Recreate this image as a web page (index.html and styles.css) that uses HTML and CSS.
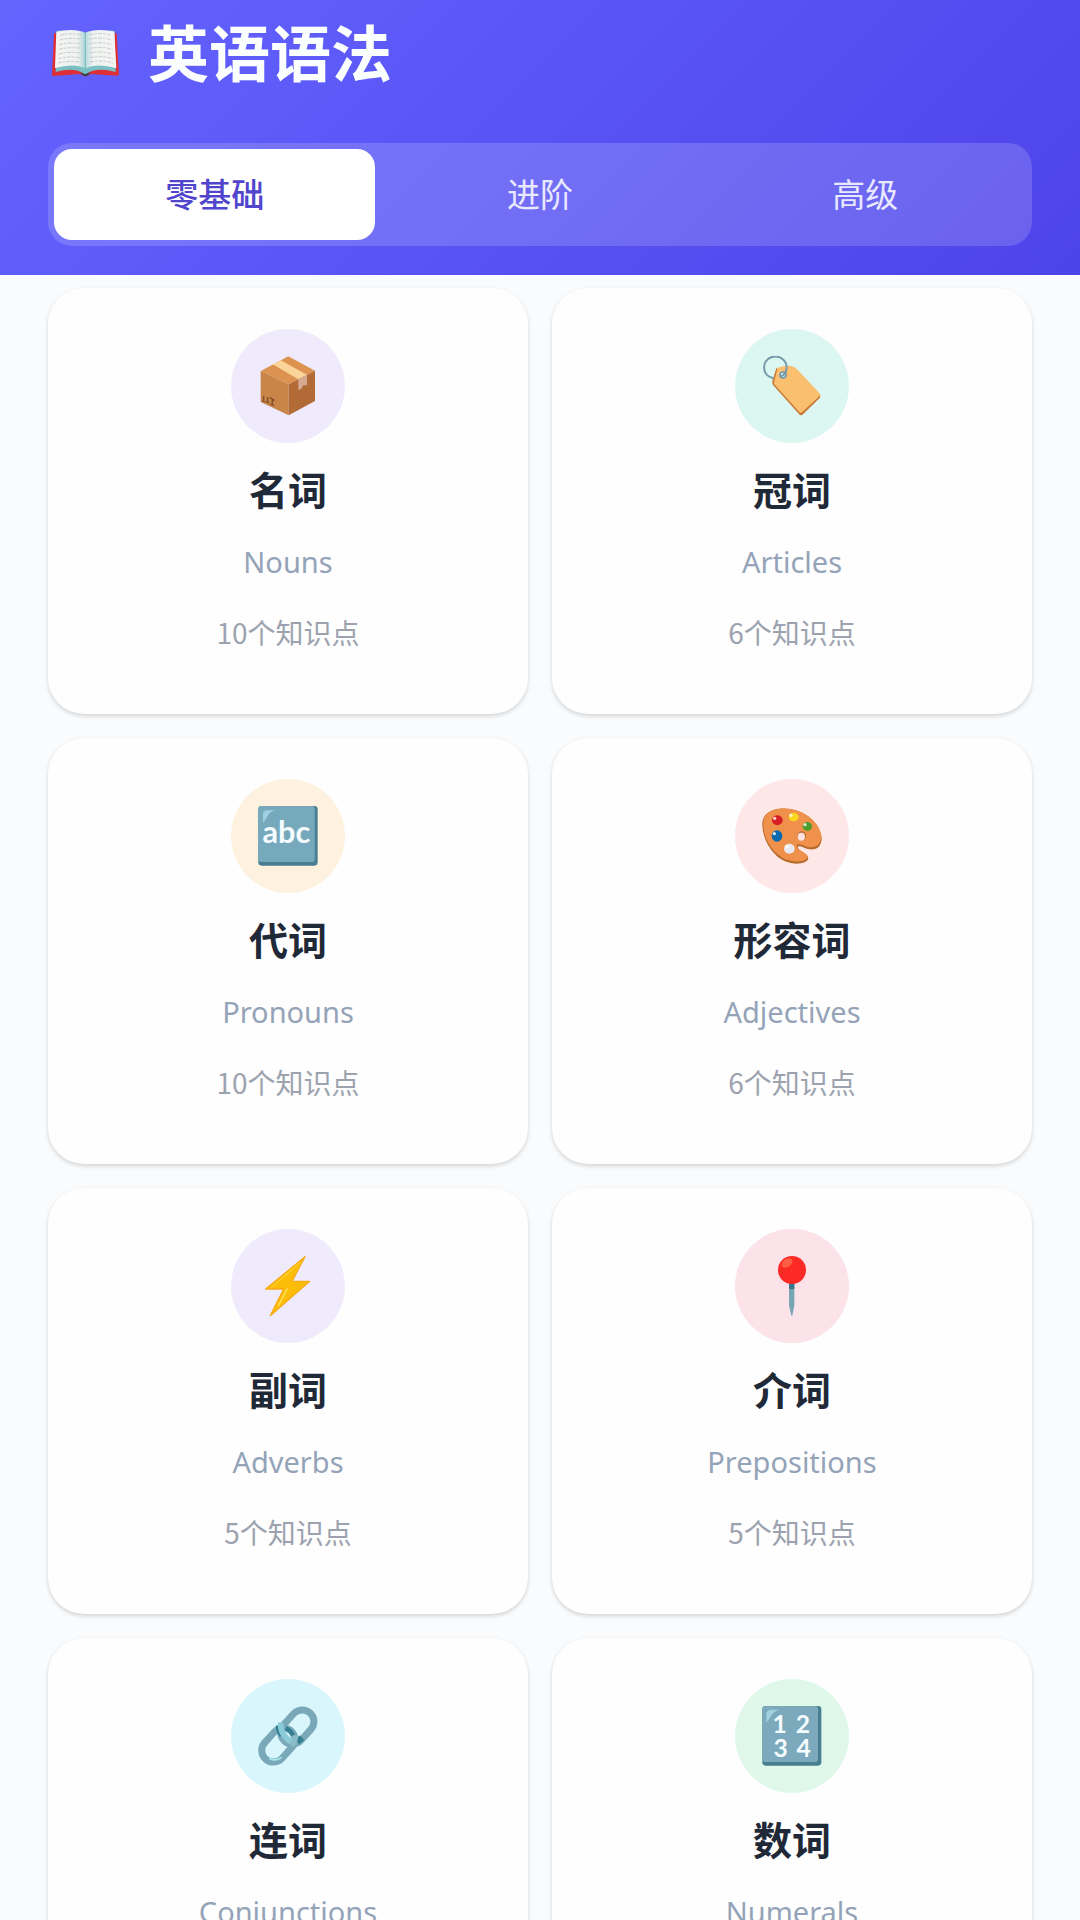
FILE: index.html
```html
<!DOCTYPE html>
<html lang="zh-CN">
<head>
<meta charset="utf-8">
<meta name="viewport" content="width=device-width, initial-scale=1">
<title>英语语法</title>
<link rel="stylesheet" href="styles.css">
</head>
<body>
<header class="header">
  <div class="brand">
    <svg class="brand-icon" viewBox="144 72 216 168" aria-hidden="true">
      <defs>
        <linearGradient id="page" x1="0" x2="1"><stop offset="0" stop-color="#f4f5f2"/><stop offset=".75" stop-color="#eef2ef"/><stop offset="1" stop-color="#a9d3d6"/></linearGradient>
        <linearGradient id="page2" x1="1" x2="0"><stop offset="0" stop-color="#f4f5f2"/><stop offset=".75" stop-color="#f1f3f1"/><stop offset="1" stop-color="#b5dadb"/></linearGradient>
      </defs>
      <path d="M162 100L350 100L357 222Q357 228 350 227L272 222Q256 236 240 222L162 228Q155 228 156 221Z" fill="#dd2f36"/>
      <path d="M240 218H272L264 226Q256 232 248 226Z" fill="#37474f"/>
      <path d="M170 92L167 216Q222 200 254 222L257 222Q290 200 347 216L343 92Q290 88 256 108Q222 88 170 92Z" fill="#79bfc3"/>
      <path d="M169 95Q222 83 256 98V205Q222 188 165 204Z" fill="url(#page)"/>
      <path d="M343 95Q290 83 256 98V205Q290 188 349 204Z" fill="url(#page2)"/>
      <path d="M180 106q28-8 65-2M179 120q30-8 66-3M178 134q30-8 66-3M177 148q30-8 67-3M176 162q30-8 67-3M175 176q30-8 67-3M174 189q30-8 67-3M268 104q35-8 66 2M268 117q35-7 67 3M268 131q36-7 68 3M269 145q36-7 68 3M269 159q36-7 69 3M270 173q36-7 69 3M270 186q36-7 70 3" fill="none" stroke="#b4b7b9" stroke-width="2" stroke-dasharray="12 3 7 4"/>
      <path d="M256 98V222" stroke="#78babd" stroke-width="3"/>
    </svg>
    <h1 class="title">英语语法</h1>
  </div>
  <nav class="tabs" aria-label="难度">
    <button class="tab tab-active" type="button" aria-pressed="true">零基础</button>
    <button class="tab" type="button" aria-pressed="false">进阶</button>
    <button class="tab" type="button" aria-pressed="false">高级</button>
  </nav>
</header>
<main class="content">
  <div class="grid">
    <a class="card" href="#nouns">
      <span class="badge violet">
        <svg class="icon" viewBox="145 140 180 180" aria-hidden="true">
          <path d="M236 141L316 184L237 225L153 185Z" fill="#dc9350"/>
          <path d="M153 185L237 225V318L153 278Z" fill="#c98447"/>
          <path d="M316 184V275L237 318V225Z" fill="#b26a36"/>
          <path d="M189 165L213 153L292 196L266 210Z" fill="#fbd49a"/>
          <path d="M266 210L292 196V228L280 228L275 239L266 242Z" fill="#d5aa91"/>
          <path d="M162 259v14M158 274l9 4M174 263v16M170 277l8 4M188 268v20M182 284l12 5M181 265l14 9" stroke="#7d4f2a" stroke-width="4" fill="none"/>
        </svg>
      </span>
      <span class="name">名词</span><span class="english">Nouns</span><span class="count">10个知识点</span>
    </a>
    <a class="card" href="#articles">
      <span class="badge teal">
        <svg class="icon" viewBox="127 140 180 180" aria-hidden="true">
          <path d="M170 176L158 216Q157 224 162 229L238 314Q244 321 250 315L300 266Q303 262 301 257Z" fill="#c87832"/>
          <path d="M174 175Q192 168 215 170Q224 171 232 180L300 252Q303 257 299 261L247 309Q242 312 238 307L165 226Q161 221 164 214Z" fill="#fbbf70"/>
          <circle cx="190" cy="197" r="9" fill="#dff8f4" stroke="#6e98ab" stroke-width="5"/>
          <path d="M159 206C126 199 124 153 157 143C187 136 205 160 200 182Q198 193 187 200" fill="none" stroke="#7799aa" stroke-width="6" stroke-linecap="round"/>
        </svg>
      </span>
      <span class="name">冠词</span><span class="english">Articles</span><span class="count">6个知识点</span>
    </a>
    <a class="card" href="#pronouns">
      <span class="badge amber">
        <svg class="icon" viewBox="145 140 180 180" aria-hidden="true">
          <rect x="146" y="140" width="178" height="179" rx="10" fill="#477f91"/>
          <rect x="146" y="140" width="169" height="168" rx="9" fill="#76a9bc"/>
          <path d="M160 192V165Q160 153 174 153H197Q177 158 171 176Z" fill="#a0cfe3"/>
          <text class="glyph-text" x="230" y="252" font-size="92" text-anchor="middle">abc</text>
        </svg>
      </span>
      <span class="name">代词</span><span class="english">Pronouns</span><span class="count">10个知识点</span>
    </a>
    <a class="card" href="#adjectives">
      <span class="badge red">
        <svg class="icon" viewBox="127 140 180 180" aria-hidden="true">
          <path d="M128 195C127 160 164 143 202 148C256 151 302 192 306 235C306 265 288 274 264 269C251 265 237 256 234 264C238 277 264 280 266 297C264 313 229 317 205 309C160 296 128 241 128 195Z" fill="#b56a2c"/>
          <path d="M131 190C132 159 164 145 202 148C256 151 302 192 305 230C304 258 286 268 262 262C244 255 230 249 231 263C236 275 261 280 264 292C260 307 229 310 207 303C162 289 129 239 131 190Z" fill="#ef914a"/>
          <ellipse cx="246" cy="230" rx="13" ry="14" fill="#b56a2c"/><ellipse cx="245" cy="232" rx="11" ry="12" fill="#ffe1df"/>
          <ellipse cx="173" cy="183" rx="16" ry="15" fill="#d71f24"/><ellipse cx="222" cy="173" rx="15" ry="13" fill="#f9d71e"/>
          <ellipse cx="263" cy="201" rx="14" ry="13" fill="#4b9e2b"/><ellipse cx="172" cy="230" rx="16" ry="17" fill="#0869ad"/>
          <ellipse cx="209" cy="268" rx="16" ry="15" fill="#e8e8ee"/>
          <g fill="#fff" opacity=".8"><circle cx="165" cy="177" r="5"/><circle cx="214" cy="168" r="5"/><circle cx="256" cy="196" r="5"/><circle cx="164" cy="223" r="5"/><circle cx="202" cy="262" r="6"/></g>
        </svg>
      </span>
      <span class="name">形容词</span><span class="english">Adjectives</span><span class="count">6个知识点</span>
    </a>
    <a class="card" href="#adverbs">
      <span class="badge violet">
        <svg class="icon" viewBox="145 140 180 180" aria-hidden="true">
          <path d="M286 142L168 239H222L182 319L300 216H247Z" fill="#fcbd08" stroke="#f7ab18" stroke-width="4" stroke-linejoin="round"/>
          <path d="M272 159L187 232" stroke="#ffd02b" stroke-width="4" stroke-linecap="round"/>
          <path d="M232 239L207 288" stroke="#ffdc4b" stroke-width="5" stroke-linecap="round"/>
        </svg>
      </span>
      <span class="name">副词</span><span class="english">Adverbs</span><span class="count">5个知识点</span>
    </a>
    <a class="card" href="#prepositions">
      <span class="badge pink">
        <svg class="icon" viewBox="127 140 180 180" aria-hidden="true">
          <path d="M208 218H224V288L218 319H215L208 288Z" fill="#79a6b5"/>
          <path d="M208 220H224V238Q216 241 208 238Z" fill="#35798b"/>
          <circle cx="217" cy="182" r="42" fill="#fc2a24"/>
          <ellipse cx="202" cy="161" rx="18" ry="12" transform="rotate(-35 202 161)" fill="#ff6b4b" opacity=".8"/>
        </svg>
      </span>
      <span class="name">介词</span><span class="english">Prepositions</span><span class="count">5个知识点</span>
    </a>
    <a class="card" href="#conjunctions">
      <span class="badge cyan">
        <svg class="icon" viewBox="145 140 180 180" aria-hidden="true">
          <g fill="none" stroke="#79a9b9" stroke-width="21">
            <rect x="206" y="168" width="114" height="70" rx="35" transform="rotate(-48 263 203)"/>
            <rect x="149" y="222" width="114" height="70" rx="35" transform="rotate(-48 206 257)"/>
            <path d="M208 199Q207 214 218 227" stroke="#347f91" stroke-width="19"/>
            <path d="M214 190Q208 221 245 249" stroke="#8bcad7" stroke-width="17"/>
            <path d="M228 207Q245 214 250 228" stroke="#347f91" stroke-width="13"/>
            <path d="M263 248L277 235" stroke="#347f91" stroke-width="19"/>
            <path d="M255 229Q260 243 245 258" stroke="#8bbdc9" stroke-width="17"/>
          </g>
          <path d="M181 298Q198 307 215 295" fill="none" stroke="#a6e8ee" stroke-width="5" stroke-linecap="round"/>
        </svg>
      </span>
      <span class="name">连词</span><span class="english">Conjunctions</span><span class="count">5个知识点</span>
    </a>
    <a class="card" href="#numerals">
      <span class="badge green">
        <svg class="icon" viewBox="127 140 180 180" aria-hidden="true">
          <rect x="128" y="140" width="177" height="179" rx="10" fill="#477f91"/>
          <rect x="128" y="140" width="167" height="168" rx="9" fill="#7caabc"/>
          <path d="M140 191V165Q140 151 156 151H179Q159 157 151 175Z" fill="#a0d1df"/>
          <text class="glyph-text" font-size="74" text-anchor="middle"><tspan x="180" y="220">1</tspan><tspan x="250" y="220">2</tspan><tspan x="183" y="292">3</tspan><tspan x="252" y="292">4</tspan></text>
        </svg>
      </span>
      <span class="name">数词</span><span class="english">Numerals</span><span class="count">5个知识点</span>
    </a>
  </div>
</main>
</body>
</html>
```
FILE: styles.css
```css
* {
  box-sizing: border-box;
}

body {
  margin: 0;
  height: 100vh;
  display: flex;
  flex-direction: column;
  overflow: hidden;
  background: #fafbfc;
  color: #1f2937;
  font-family: "Noto Sans", "Noto Sans CJK SC", sans-serif;
}

.header {
  flex: none;
  padding: 16px 48px 29px;
  background: linear-gradient(135deg, #6464ff 0%, #4d43ea 100%);
}

.brand {
  display: flex;
  align-items: center;
  gap: 28px;
  margin-bottom: 55px;
}

.brand-icon {
  width: 72px;
  height: 56px;
}

.title {
  margin: 0;
  padding-bottom: 2px;
  font-family: "Noto Sans CJK SC", sans-serif;
  font-size: 61px;
  line-height: 70px;
  font-weight: 700;
  color: #fbfeff;
}

.tabs {
  display: flex;
  gap: 4px;
  padding: 6px;
  border-radius: 24px;
  background: rgba(255, 255, 255, 0.16);
}

.tab {
  flex: 1;
  padding: 0 0 3px;
  border: 0;
  border-radius: 18px;
  background: transparent;
  color: #e8e9ff;
  font-family: "Noto Sans CJK SC", sans-serif;
  font-size: 33px;
  line-height: 88px;
  font-weight: 400;
  cursor: pointer;
}

.tab-active {
  background: #fff;
  color: #5145cd;
  font-weight: 500;
}

.content {
  flex: 1;
  min-height: 0;
  overflow-y: auto;
  padding: 13px 48px 48px;
  scrollbar-width: none;
}

.grid {
  display: grid;
  grid-template-columns: 1fr 1fr;
  gap: 24px;
}

.card {
  display: flex;
  flex-direction: column;
  align-items: center;
  padding: 41px 24px 62px;
  border-radius: 36px;
  background: #fefefe;
  box-shadow: 0 2px 4px rgba(0, 0, 0, 0.16);
  color: inherit;
  text-decoration: none;
}

.badge {
  display: flex;
  align-items: center;
  justify-content: center;
  width: 114px;
  height: 114px;
  border-radius: 50%;
}

.violet { background: #efebfd; }
.teal { background: #dcf7f2; }
.amber { background: #fef1e0; }
.red { background: #fee7e7; }
.pink { background: #fce2e9; }
.cyan { background: #d9f6fc; }
.green { background: #dff8ea; }

.icon {
  width: 60px;
  height: 60px;
}

.glyph-text {
  fill: #f4fcff;
  font-family: Lato, sans-serif;
  font-weight: 700;
}

.name {
  margin-top: 21px;
  font-family: "Noto Sans CJK SC", sans-serif;
  font-size: 39px;
  line-height: 48px;
  font-weight: 700;
}

.english {
  margin-top: 30px;
  font-size: 29px;
  line-height: 40px;
  color: #94a3b8;
}

.count {
  margin-top: 30px;
  font-family: "Noto Sans CJK SC", sans-serif;
  font-size: 28px;
  line-height: 40px;
  color: #9ca3af;
}
```
